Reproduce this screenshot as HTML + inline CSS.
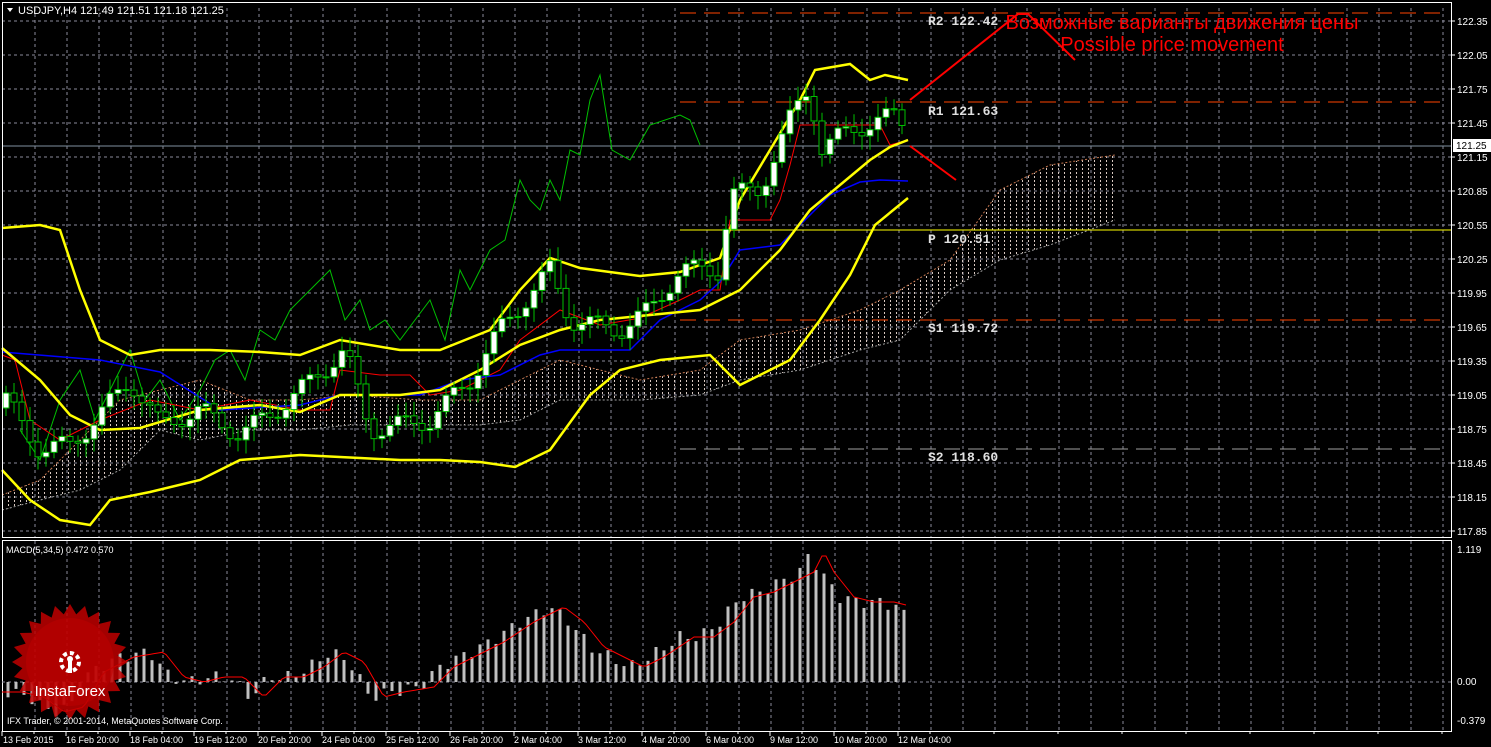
<!DOCTYPE html>
<html><head><meta charset="utf-8"><style>
html,body{margin:0;padding:0;background:#000;width:1491px;height:747px;overflow:hidden}
svg{display:block}
text{font-family:"Liberation Sans",sans-serif}
.m{font-family:"Liberation Mono",monospace;font-weight:bold}
</style></head><body>
<svg id="s" width="1491" height="747" xmlns="http://www.w3.org/2000/svg">
<defs>
<pattern id="hat" width="6" height="4" patternUnits="userSpaceOnUse"><rect x="2" y="0" width="1" height="2" fill="#d8c8c0"/></pattern>
</defs>
<g id="g"></g>
</svg>
<script>
const g=document.getElementById('g');let h='';
const L=(x1,y1,x2,y2,c,w,d)=>h+=`<line x1="${x1}" y1="${y1}" x2="${x2}" y2="${y2}" stroke="${c}" stroke-width="${w||1}" ${d?`stroke-dasharray="${d}"`:''}/>`;
const P=(pts,c,w)=>h+=`<polyline fill="none" stroke="${c}" stroke-width="${w||1}" points="${pts.map(p=>p.join(',')).join(' ')}"/>`;
const T=(x,y,t,c,s,cl,a)=>h+=`<text x="${x}" y="${y}" fill="${c}" font-size="${s}" ${cl?`class="${cl}"`:''} ${a?`text-anchor="${a}"`:''}>${t}</text>`;
function interp(pts,x){if(x<=pts[0][0])return pts[0][1];for(let i=0;i<pts.length-1;i++){if(x>=pts[i][0]&&x<=pts[i+1][0]){const t=(x-pts[i][0])/(pts[i+1][0]-pts[i][0]);return pts[i][1]+t*(pts[i+1][1]-pts[i][1]);}}return pts[pts.length-1][1];}
for(let x=35;x<1451;x+=32){L(x,8,x,537,'#8a8a9a',1,'3,3');L(x,541,x,730,'#8a8a9a',1,'3,3');}
for(let i=0;i<16;i++){const y=21+i*34;L(2,y,1451,y,'#8a8a9a',1,'3,3');}
const cu=[[2,495],[40,480],[80,440],[120,400],[160,390],[200,380],[250,400],[300,400],[350,395],[420,400],[480,400],[520,380],[560,360],[600,370],[640,380],[700,370],[740,340],[800,330],[860,310],[900,290],[950,260],[1000,190],[1050,165],[1115,155]];
const cl=[[2,510],[40,500],[80,490],[120,470],[160,430],[200,440],[250,430],[300,430],[350,425],[420,425],[480,425],[520,420],[560,400],[600,400],[640,400],[700,395],[740,380],[800,370],[860,350],[900,340],[950,290],[1000,260],[1050,245],[1115,220]];
h+=`<polygon fill="url(#hat)" points="${cu.concat(cl.slice().reverse()).map(p=>p.join(',')).join(' ')}"/>`;
h+=`<polyline fill="none" stroke="#c87850" stroke-dasharray="2,2" points="${cu.map(p=>p.join(',')).join(' ')}"/>`;
h+=`<polyline fill="none" stroke="#a0a0a0" stroke-dasharray="2,2" points="${cl.map(p=>p.join(',')).join(' ')}"/>`;
L(680,13,1445,13,'#ff4500',1,'16,8');L(680,102,1445,102,'#ff4500',1,'16,8');
L(680,230,1451,230,'#ffff00',1);L(680,320,1445,320,'#ff4500',1,'16,8');L(680,449,1445,449,'#a0a0a0',1,'16,8');
L(2,146,1451,146,'#8090a0',1);
P([[20,430],[40,460],[60,400],[80,370],[95,420],[110,390],[130,350],[145,400],[160,380],[180,420],[200,390],[215,360],[230,350],[245,380],[260,330],[275,340],[290,310],[310,290],[330,270],[345,320],[360,300],[370,330],[385,320],[400,340],[415,320],[430,300],[445,340],[460,270],[470,290],[490,250],[505,240],[515,200],[520,180],[530,200],[540,210],[550,180],[560,200],[570,150],[580,155],[590,100],[600,75],[612,150],[630,160],[650,125],[680,115],[690,120],[700,145]],'#00c000');
P([[2,355],[15,360],[30,420],[60,440],[100,420],[150,400],[200,410],[250,400],[300,410],[330,410],[340,370],[380,375],[410,375],[430,395],[460,390],[500,370],[520,340],[560,310],[600,325],[640,318],[680,300],[700,290],[720,290],[730,220],[770,220],[780,200],[790,165],[800,125],[830,125],[860,125],[880,125],[890,145],[908,140]],'#ff0000');
P([[2,352],[100,360],[160,372],[220,410],[300,405],[340,395],[420,395],[460,380],[500,375],[540,355],[560,350],[630,350],[660,320],[700,300],[720,282],[740,250],[780,245],[800,225],[830,195],[860,182],[880,180],[908,181]],'#0000ff',1.5);
const bu=[[2,228],[40,225],[60,230],[80,290],[100,340],[130,355],[160,350],[210,350],[260,352],[300,355],[340,340],[400,350],[440,350],[490,330],[520,290],[550,258],[580,268],[640,276],[680,272],[720,258],[740,200],[770,150],[800,100],[815,70],[850,64],[870,80],[885,75],[908,80]];
const bm=[[2,348],[40,380],[70,415],[100,430],[140,428],[200,410],[260,405],[300,412],[340,395],[400,395],[440,390],[480,370],[520,345],[560,330],[600,320],[650,315],[700,310],[740,290],[780,250],[810,210],[840,185],[870,160],[890,147],[908,140]];
const bl=[[2,470],[30,500],[60,520],[90,525],[110,500],[150,492],[200,480],[240,460],[300,455],[360,458],[400,460],[440,460],[480,462],[515,467],[550,450],[590,395],[620,370],[660,360],[710,355],[740,385],[790,360],[820,320],[850,275],[875,225],[908,198]];
P(bu,'#ffff00',2.5);P(bm,'#ffff00',2.5);P(bl,'#ffff00',2.5);
const cp=[[6,400],[40,450],[70,445],[100,415],[130,380],[160,425],[200,410],[240,435],[290,400],[345,350],[370,430],[430,420],[470,380],[500,330],[550,270],[570,320],[620,330],[650,310],[680,270],[720,270],[730,195],[760,190],[790,120],[810,85],[820,150],[850,130],[880,120],[900,115],[908,145]];
let prev=interp(cp,6)+8;
for(let x=6;x<=908;x+=8){const c=interp(cp,x)+Math.sin(x*1.7)*10;const o=prev;prev=c;
const top=Math.min(o,c),bot=Math.max(o,c);
L(x,top-5-Math.abs(Math.sin(x*3.1))*9,x,bot+5+Math.abs(Math.cos(x*2.3))*9,'#00c000',1);
const bull=c<o;h+=`<rect x="${x-3}" y="${top}" width="6" height="${Math.max(bot-top,1)}" fill="${bull?'#fff':'#000'}" stroke="#00c000" stroke-width="1"/>`;}
P([[910,100],[1018,14],[1028,14],[1075,60]],'#ff0000',2);
L(910,146,956,180,'#ff0000',2);
T(928,25,'R2 122.42','#e0e0e0',13,'m');T(928,115,'R1 121.63','#e0e0e0',13,'m');T(928,243,'P 120.51','#e0e0e0',13,'m');T(928,332,'S1 119.72','#e0e0e0',13,'m');T(928,461,'S2 118.60','#e0e0e0',13,'m');
T(1182,29,'Возможные варианты движения цены','#ff0000',20,'','middle');T(1172,51,'Possible price movement','#ff0000',20,'','middle');
h+=`<rect x="2.5" y="2.5" width="1449" height="535" fill="none" stroke="#fff"/>`;
h+=`<rect x="2.5" y="540.5" width="1449" height="191" fill="none" stroke="#fff"/>`;
const lab=['122.35','122.05','121.75','121.45','121.15','120.85','120.55','120.25','119.95','119.65','119.35','119.05','118.75','118.45','118.15','117.85'];
lab.forEach((t,i)=>{const y=21+i*34;L(1451,y,1455,y,'#fff');T(1457,y+4,t,'#fff',10);});
h+=`<rect x="1453" y="139" width="38" height="13" fill="#fff"/>`;T(1456,149,'121.25','#000',10);
T(1457,553,'1.119','#fff',10);T(1457,685,'0.00','#fff',10);T(1457,724,'-0.379','#fff',10);
h+=`<polygon points="7,8 13,8 10,12" fill="#fff"/>`;T(18,14,'USDJPY,H4  121.49 121.51 121.18 121.25','#fff',11);
T(6,553,'MACD(5,34,5) 0.472 0.570','#fff',9);
L(2,682,1451,682,'#8a8a9a',1,'3,3');
const mh=[[8,-10],[30,-15],[50,-30],[70,-25],[90,10],[120,25],[150,30],[170,5],[190,0],[210,5],[230,5],[250,-15],[270,5],[290,5],[310,15],[330,30],[350,20],[370,-15],[390,-10],[420,-5],[440,15],[460,25],[490,40],[520,60],[550,75],[570,60],[590,35],[610,25],[630,15],[650,25],[680,45],[700,45],[720,60],[740,85],[760,90],[780,100],[800,110],[810,130],[820,110],[840,85],[860,80],[880,80],[900,75],[908,60]];
const sig=[];
for(let x=8;x<=908;x+=8){const v=interp(mh,x)+Math.sin(x*2.1)*6;const y=682-v;h+=`<rect x="${x-1.5}" y="${Math.min(y,682)}" width="3" height="${Math.abs(v)}" fill="#c0c0c0"/>`;}
for(let x=2;x<=908;x+=4){sig.push([x,682-(interp(mh,x-14))]);}
P(sig,'#ff0000',1);
let st='';for(let i=0;i<48;i++){const a=i*Math.PI/24,r=i%2?48:58;st+=`${70+r*Math.cos(a)},${662+r*Math.sin(a)} `;}
h+=`<polygon points="${st}" fill="#c00000" opacity="0.85"/>`;
h+=`<circle cx="70" cy="662" r="44" fill="#c00000" opacity="0.5"/>`;
h+=`<circle cx="70" cy="662" r="9" fill="none" stroke="#fff" stroke-width="4" stroke-dasharray="4,3"/><rect x="68" y="660" width="4" height="13" fill="#fff"/><circle cx="70" cy="659" r="3" fill="#fff"/>`;
T(70,696,'InstaForex','#fff',15,'','middle');
T(7,724,'IFX Trader, © 2001-2014, MetaQuotes Software Corp.','#fff',9);
const tl=['13 Feb 2015','16 Feb 20:00','18 Feb 04:00','19 Feb 12:00','20 Feb 20:00','24 Feb 04:00','25 Feb 12:00','26 Feb 20:00','2 Mar 04:00','3 Mar 12:00','4 Mar 20:00','6 Mar 04:00','9 Mar 12:00','10 Mar 20:00','12 Mar 04:00'];
tl.forEach((t,i)=>{const x=2+i*64;L(x,731,x,736,'#fff');T(x+(i?0:1),743,t,'#fff',9);});
for(let x=34;x<1451;x+=64)L(x,731,x,734,'#fff');
g.innerHTML=h;
</script>
</body></html>
